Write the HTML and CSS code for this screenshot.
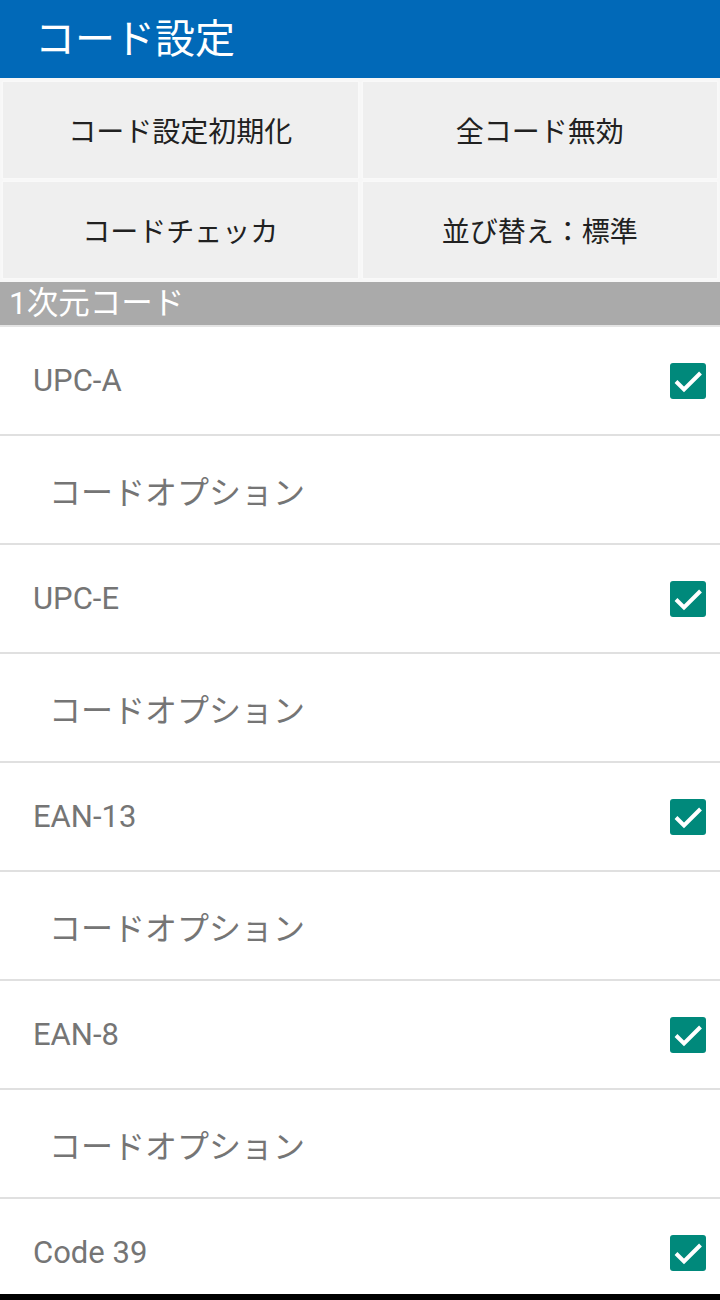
FILE: index.html
```html
<html>
	<head>
		<meta charset="utf-8">
		<title>コード設定</title>
		<link rel="stylesheet" href="styles.css">
	</head>
	<body>
		<div class="screen">
			<div class="titlebar">コード設定</div>
			<div class="btngrid">
				<button>コード設定初期化</button>
				<button>全コード無効</button>
				<button>コードチェッカ</button>
				<button>並び替え：標準</button>
			</div>
			<div class="section">1次元コード</div>
			<div class="row"><span class="name">UPC-A</span><span class="check"><svg viewBox="0 0 36 36"><polyline points="6,18.5 14,26.5 30.5,10"/></svg></span></div>
			<div class="row option">コードオプション</div>
			<div class="row"><span class="name">UPC-E</span><span class="check"><svg viewBox="0 0 36 36"><polyline points="6,18.5 14,26.5 30.5,10"/></svg></span></div>
			<div class="row option">コードオプション</div>
			<div class="row"><span class="name">EAN-13</span><span class="check"><svg viewBox="0 0 36 36"><polyline points="6,18.5 14,26.5 30.5,10"/></svg></span></div>
			<div class="row option">コードオプション</div>
			<div class="row"><span class="name">EAN-8</span><span class="check"><svg viewBox="0 0 36 36"><polyline points="6,18.5 14,26.5 30.5,10"/></svg></span></div>
			<div class="row option">コードオプション</div>
			<div class="row"><span class="name">Code 39</span><span class="check"><svg viewBox="0 0 36 36"><polyline points="6,18.5 14,26.5 30.5,10"/></svg></span></div>
		</div>
	</body>
</html>
```

FILE: styles.css
```css
body {
	margin: 0;
	background: #000000;
	font-family: Roboto, "Noto Sans CJK JP", sans-serif;
}
.screen {
	height: 1294px;
	overflow: hidden;
	background: #ffffff;
}
.titlebar {
	height: 78px;
	background: #0169b8;
	color: #ffffff;
	font-size: 40px;
	line-height: 80px;
	padding-left: 35px;
	box-sizing: border-box;
}
.btngrid {
	display: grid;
	grid-template-columns: 1fr 1fr;
	grid-auto-rows: 96px;
	gap: 4px 5px;
	padding: 4px 3px;
	background: #f7f7f7;
}
button {
	font-family: Roboto, "Noto Sans CJK JP", sans-serif;
	font-size: 28px;
	color: #212121;
	background: #efefef;
	border: none;
	box-shadow: 0 0 2px 1px #fafafa;
	border-radius: 0;
	padding: 0;
}
.section {
	height: 43px;
	background: #aaaaaa;
	color: #ffffff;
	font-size: 31.5px;
	line-height: 43px;
	padding-left: 9px;
	border-bottom: 2px solid #e4e4e4;
}
.row {
	height: 107px;
	border-bottom: 2px solid #e0e0e0;
	display: flex;
	align-items: center;
	justify-content: space-between;
	padding: 0 14px 0 33px;
	color: #757575;
	font-size: 31px;
}
.option {
	padding-left: 49px;
	font-size: 32px;
}
.check {
	width: 36px;
	height: 36px;
	background: #00897b;
	border-radius: 3px;
	display: flex;
}
.check svg {
	width: 36px;
	height: 36px;
	fill: none;
	stroke: #ffffff;
	stroke-width: 4;
}
```
